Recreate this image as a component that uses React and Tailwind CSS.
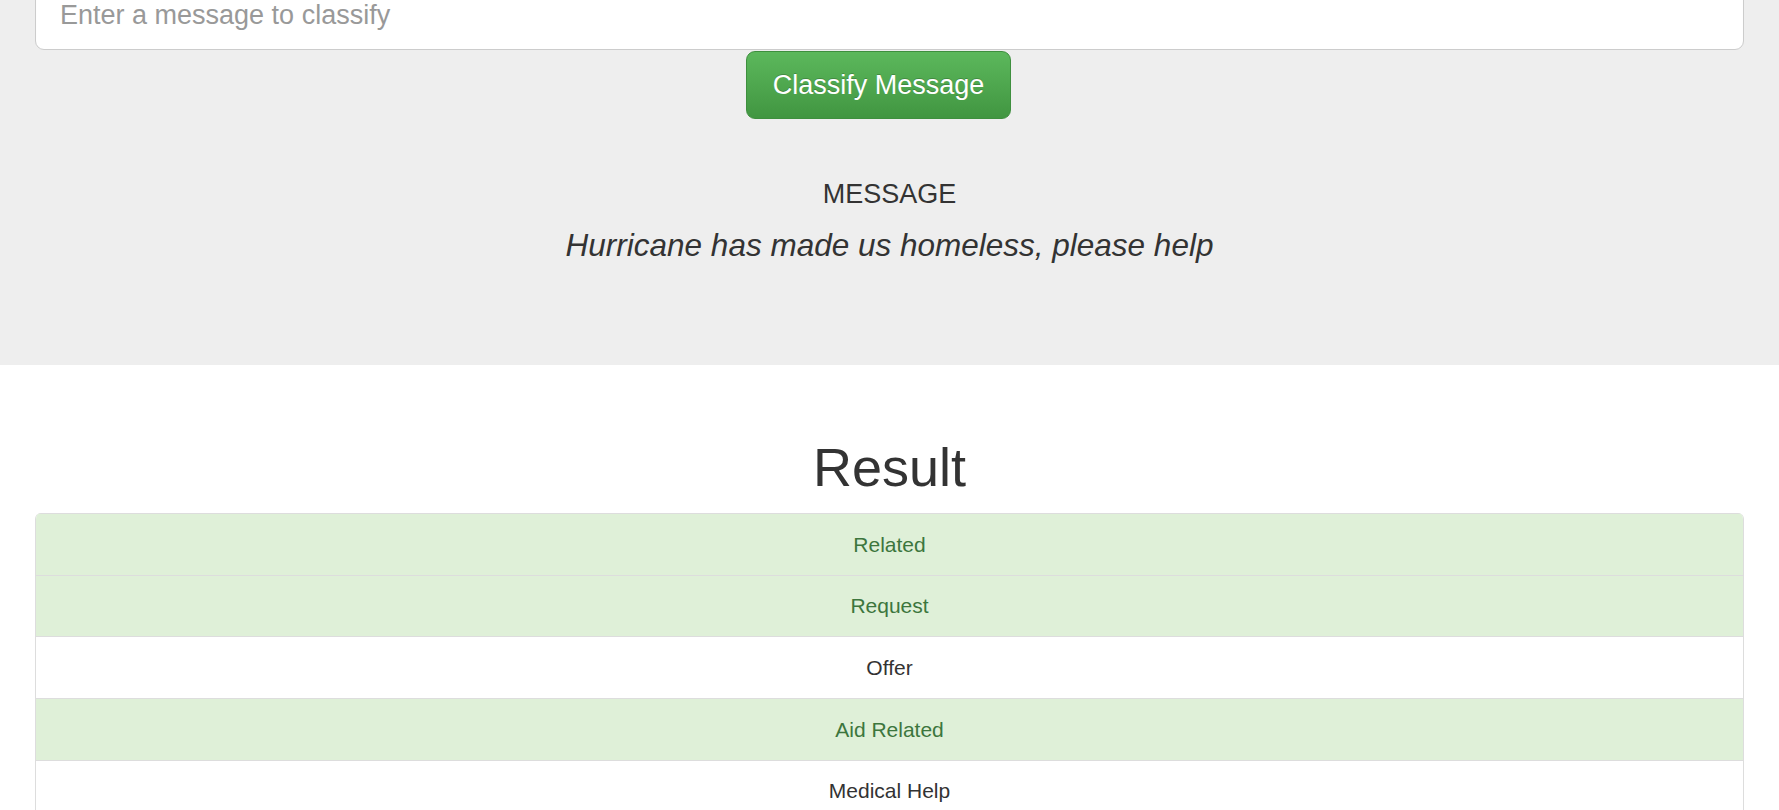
const categories = [
  { name: "Related", hit: true },
  { name: "Request", hit: true },
  { name: "Offer", hit: false },
  { name: "Aid Related", hit: true },
  { name: "Medical Help", hit: false },
  { name: "Medical Products", hit: false },
  { name: "Search And Rescue", hit: false },
  { name: "Security", hit: false },
];

export default function App() {
  return (
    <div className="min-h-screen bg-white text-[#333] font-['Liberation_Sans',Arial,sans-serif]">
      {/* jumbotron, page is scrolled so the input top is cut off */}
      <div className="bg-[#eee] px-[35px] pb-[97px]">
        <input
          type="text"
          placeholder="Enter a message to classify"
          className="block w-full h-[69px] -mt-[19px] px-[24px] text-[27px] bg-white border border-[#ccc] rounded-[9px] shadow-[inset_0_1px_1px_rgba(0,0,0,0.075)] placeholder:text-[#999] outline-none"
        />
        <div className="flex justify-center pr-[22px]">
          <button className="h-[68px] px-[26px] mt-px text-[27px] text-white rounded-[9px] border border-[#3e8f3e] bg-gradient-to-b from-[#5cb85c] to-[#419641] [text-shadow:0_-1px_0_rgba(0,0,0,0.2)]">
            Classify Message
          </button>
        </div>
        <h4 className="mt-[60px] text-center text-[27px] leading-[30px]">MESSAGE</h4>
        <p className="mt-[14px] text-center text-[31.5px] leading-[45px] italic">
          Hurricane has made us homeless, please help
        </p>
      </div>

      <div className="px-[35px]">
        <h1 className="mt-[73px] mb-[16px] text-center text-[54px] leading-[59px]">Result</h1>
        <div className="border-x border-b border-[#ddd] rounded-t-[6px] overflow-hidden">
          {categories.map((c) => (
            <div
              key={c.name}
              className={
                c.hit
                  ? "h-[61.7px] flex items-center justify-center border-t border-[#ddd] bg-[#dff0d8] text-[#3c763d] text-[21px]"
                  : "h-[61.7px] flex items-center justify-center border-t border-[#ddd] bg-white text-[#333] text-[21px]"
              }
            >
              {c.name}
            </div>
          ))}
        </div>
      </div>
    </div>
  );
}
